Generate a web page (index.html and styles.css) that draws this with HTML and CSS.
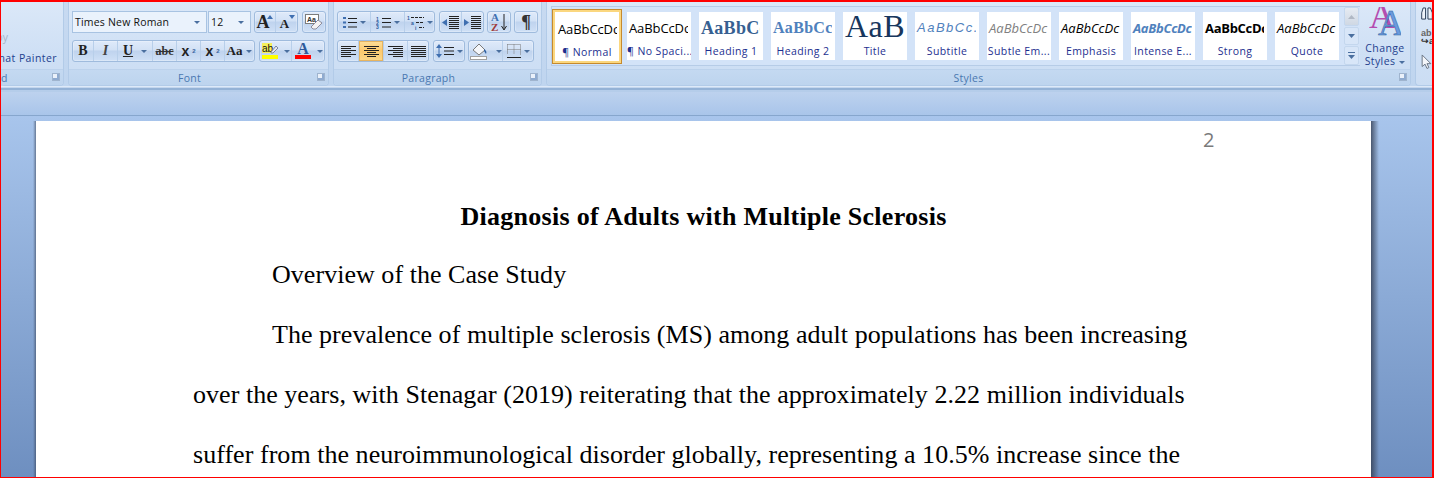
FILE: index.html
```html
<!DOCTYPE html>
<html lang="en">
<head>
<meta charset="utf-8">
<title>Diagnosis of Adults with Multiple Sclerosis</title>
<link rel="stylesheet" href="styles.css">
</head>
<body>
<div class="app">
  <div class="ribbon">
    <section class="group g-clip">
      <div class="body clip-body">
        <div class="clip-copy">py</div>
        <div class="clip-fmt">Format Painter</div>
      </div>
      <div class="label clip-label"><span class="clip-d">d</span><i class="launch"></i></div>
    </section>

    <section class="group g-font">
      <div class="body">
        <div class="row">
          <div class="select w135"><span>Times New Roman</span><i class="caret"></i></div>
          <div class="select w43 m1"><span>12</span><i class="caret"></i></div>
          <div class="bg m3">
            <div class="b w21"><span class="big-a">A</span><svg class="up" width="6" height="4"><path d="M0 4L3 0L6 4Z" fill="#3f6fb0"/></svg></div>
            <div class="b w21"><span class="small-a">A</span><svg class="down" width="6" height="4"><path d="M0 0H6L3 4Z" fill="#3f6fb0"/></svg></div>
          </div>
          <div class="bg m4"><div class="b w22">
            <svg width="20" height="18" viewBox="0 0 20 18"><rect x="1.500" y="1.500" width="13" height="9" fill="#fff" stroke="#7c7c7c"/><text x="3" y="9" class="tiny">Aa</text><path d="M7 14L14 7L18 10L12 16H9Z" fill="#f4f2f2" stroke="#8c8c9c"/></svg>
          </div></div>
        </div>
        <div class="row">
          <div class="bg">
            <div class="b w21 f-b">B</div>
            <div class="b w24 f-i">I</div>
            <div class="b w35"><span class="f-u">U</span><i class="caret c-r"></i></div>
            <div class="b w24 f-s">abc</div>
            <div class="b w24 f-x">x<sub>2</sub></div>
            <div class="b w24 f-x">x<sup>2</sup></div>
            <div class="b w29"><span class="f-aa">Aa</span><i class="caret c-r2"></i></div>
          </div>
          <div class="bg m4">
            <div class="b w32">
              <svg width="18" height="18" viewBox="0 0 18 18"><rect x="1" y="1" width="10" height="10" fill="#f5f05a"/><text x="1" y="9.500" class="ab">ab</text><path d="M10 10L15 4L17 6L12 11H10Z" fill="#e8e8f0" stroke="#7a88a0"/><rect x="1" y="13" width="16" height="4" fill="#ffff00"/></svg>
              <i class="caret c-h"></i>
            </div>
            <div class="b w32">
              <svg width="18" height="18" viewBox="0 0 18 18"><text x="9" y="12" text-anchor="middle" class="fa">A</text><rect x="1" y="13" width="16" height="4" fill="#f00"/></svg>
              <i class="caret c-h"></i>
            </div>
          </div>
        </div>
      </div>
      <div class="label lab-pad">Font<i class="launch"></i></div>
    </section>

    <section class="group g-para">
      <div class="body">
        <div class="row">
          <div class="bg">
            <div class="b w33"><svg width="15" height="13" viewBox="0 0 15 13"><path d="M1 1h3v2h-3zM1 5.500h3v2h-3zM1 10h3v2h-3z" fill="#3f6fb0"/><path d="M6 2.500h9M6 6.500h9M6 11h9" stroke="#222"/></svg><i class="caret"></i></div>
            <div class="b w34"><svg width="15" height="13" viewBox="0 0 15 13"><text x="0" y="4.500" class="num">1</text><text x="0" y="9" class="num">2</text><text x="0" y="13" class="num">3</text><path d="M6 2.500h9M6 6.500h9M6 11h9" stroke="#222"/></svg><i class="caret"></i></div>
            <div class="b w29"><svg width="17" height="15" viewBox="0 0 17 15"><text x="0" y="5" class="num">1</text><text x="4" y="10" class="num">a</text><text x="8" y="15" class="num">i</text><path d="M4 2.500h13M9 7.500h8M12 12.500h5" stroke="#222" stroke-dasharray="3 1"/></svg><i class="caret"></i></div>
          </div>
          <div class="bg m4">
            <div class="b w22"><svg width="17" height="13" viewBox="0 0 17 13"><path d="M7 .5h10M7 2.500h10M7 4.500h10M7 6.500h10M7 8.500h10M7 10.500h10M7 12.500h10" stroke="#222"/><path d="M0 6.500L5 3V10Z" fill="#3f6fb0"/></svg></div>
            <div class="b w21"><svg width="17" height="13" viewBox="0 0 17 13"><path d="M7 .5h10M7 2.500h10M7 4.500h10M7 6.500h10M7 8.500h10M7 10.500h10M7 12.500h10" stroke="#222"/><path d="M5 6.500L0 3V10Z" fill="#3f6fb0"/></svg></div>
          </div>
          <div class="bg m3"><div class="b w22"><svg width="18" height="20" viewBox="0 0 18 20"><text x="1" y="9" class="az az1">A</text><text x="1" y="19" class="az az2">Z</text><path d="M14 2V17M11.500 14L14 18L16.500 14" stroke="#222" fill="none"/></svg></div></div>
          <div class="bg m3"><div class="b w22 f-p">¶</div></div>
        </div>
        <div class="row">
          <div class="bg">
            <div class="b w21"><svg width="15" height="11" viewBox="0 0 15 11"><path d="M0 .5h15M0 2.500h10M0 4.500h15M0 6.500h10M0 8.500h15M0 10.500h10" stroke="#222"/></svg></div>
            <div class="b w25 on"><svg width="15" height="11" viewBox="0 0 15 11"><path d="M0 .5h15M3 2.500h9M0 4.500h15M3 6.500h9M0 8.500h15M3 10.500h9" stroke="#222"/></svg></div>
            <div class="b w24"><svg width="15" height="11" viewBox="0 0 15 11"><path d="M0 .5h15M5 2.500h10M0 4.500h15M5 6.500h10M0 8.500h15M5 10.500h10" stroke="#222"/></svg></div>
            <div class="b w20"><svg width="15" height="11" viewBox="0 0 15 11"><path d="M0 .5h15M0 2.500h15M0 4.500h15M0 6.500h15M0 8.500h15M0 10.500h15" stroke="#222"/></svg></div>
          </div>
          <div class="bg m4"><div class="b w30"><svg width="18" height="16" viewBox="0 0 18 16"><path d="M3 1L6 5H0ZM3 15L6 11H0Z" fill="#3f6fb0"/><path d="M3 4V12" stroke="#3f6fb0"/><path d="M8 4.500h10M8 8h10M8 11.500h10" stroke="#222"/></svg><i class="caret"></i></div></div>
          <div class="bg m3">
            <div class="b w34"><svg width="18" height="18" viewBox="0 0 18 18"><path d="M3 8L9 2L15 8L9 13Z" fill="#f4f6fa" stroke="#7a7a7a"/><path d="M14 7C16 8 17 10 16 12L14 9Z" fill="#2d5fa0"/><rect x="0.500" y="14.500" width="16" height="3" fill="#fff" stroke="#a0a0a0"/></svg><i class="caret c-r"></i></div>
            <div class="b w30"><svg width="14" height="14" viewBox="0 0 14 14"><path d="M.5 .5h13v10M.5 .5v10M7 .5v10M.5 5.500h13" stroke="#777" stroke-dasharray="1 1" fill="none"/><path d="M0 13.500h14" stroke="#222"/></svg><i class="caret"></i></div>
          </div>
        </div>
      </div>
      <div class="label lab-pad">Paragraph<i class="launch"></i></div>
    </section>

    <section class="group g-styles">
      <div class="body styles-body">
        <div class="gallery">
          <div class="tile tile-on"><div class="pv pv-normal">AaBbCcDc</div><div class="tl">¶ Normal</div></div>
          <div class="tile"><div class="pv pv-normal">AaBbCcDc</div><div class="tl">¶ No Spaci...</div></div>
          <div class="tile"><div class="pv pv-h1">AaBbCc</div><div class="tl">Heading 1</div></div>
          <div class="tile"><div class="pv pv-h2">AaBbCc</div><div class="tl">Heading 2</div></div>
          <div class="tile"><div class="pv pv-title">AaB</div><div class="tl">Title</div></div>
          <div class="tile"><div class="pv pv-sub">AaBbCc.</div><div class="tl">Subtitle</div></div>
          <div class="tile"><div class="pv pv-se">AaBbCcDc</div><div class="tl">Subtle Em...</div></div>
          <div class="tile"><div class="pv pv-em">AaBbCcDc</div><div class="tl">Emphasis</div></div>
          <div class="tile"><div class="pv pv-ie">AaBbCcDc</div><div class="tl">Intense E...</div></div>
          <div class="tile"><div class="pv pv-st">AaBbCcDc</div><div class="tl">Strong</div></div>
          <div class="tile"><div class="pv pv-em">AaBbCcDc</div><div class="tl">Quote</div></div>
          <div class="scroll">
            <div class="sb sb-top"><svg width="7" height="4"><path d="M0 4L3.500 0L7 4Z" fill="#b0b8c4"/></svg></div>
            <div class="sb sb-mid"><svg width="7" height="4"><path d="M0 0H7L3.500 4Z" fill="#4a6f9f"/></svg></div>
            <div class="sb sb-bot"><svg width="7" height="7"><path d="M0 .5H7" stroke="#4a6f9f"/><path d="M0 3H7L3.500 7Z" fill="#4a6f9f"/></svg></div>
          </div>
        </div>
        <div class="change">
          <svg class="ca-icon" width="32" height="30" viewBox="0 0 32 30"><text x="0" y="21" class="ca ca1">A</text><text x="9" y="28" class="ca ca2">A</text></svg>
          <div class="ctext">Change<br>Styles<i class="caret c-s"></i></div>
        </div>
      </div>
      <div class="label lab-styles">Styles<i class="launch"></i></div>
    </section>

    <section class="group g-edit">
      <div class="body edit-body">
        <svg width="12" height="13" viewBox="0 0 12 13"><path d="M.5 12.500V6L2 1H4.500V12.500ZM7 12.500V1H9.500L11.500 6V12.500Z" fill="#eef3fa" stroke="#2c3e58"/></svg>
        <div class="ed-ab">ab<br><span>↪a</span></div>
        <svg width="11" height="16" viewBox="0 0 11 16"><path d="M1 1V13L4 10.500L6 15L8 14L6 10H10Z" fill="#f4f6fa" stroke="#6a7484"/></svg>
      </div>
    </section>
  </div>

  <div class="sep"></div>
  <div class="ruler"></div>

  <div class="work">
    <div class="page">
      <div class="pageno">2</div>
      <h1 class="doc-title">Diagnosis of Adults with Multiple Sclerosis</h1>
      <p class="line ind">Overview of the Case Study</p>
      <p class="line ind">The prevalence of multiple sclerosis (MS) among adult populations has been increasing</p>
      <p class="line">over the years, with Stenagar (2019) reiterating that the approximately 2.22 million individuals</p>
      <p class="line">suffer from the neuroimmunological disorder globally, representing a 10.5% increase since the</p>
    </div>
  </div>
</div>
</body>
</html>
```
FILE: styles.css
```css
* { box-sizing: border-box; }
html, body { margin: 0; padding: 0; height: 478px; overflow: hidden; }
body { font-family: "Open Sans", "Noto Sans", sans-serif; }

.app {
  width: 1434px; height: 478px; overflow: hidden;
  display: flex; flex-direction: column;
  border-top: 2px solid #f00; border-left: 1px solid #f00;
  border-right: 2px solid #f00; border-bottom: 1px solid #f00;
}

/* ribbon */
.ribbon {
  height: 84px; flex: none; display: flex; gap: 4px;
  background: linear-gradient(#c8daf1, #bfd5ef);
}
.group {
  flex: none; height: 84px; display: flex; flex-direction: column;
  border: 1px solid #b2cbe8; border-top: 0; border-radius: 0 0 4px 4px;
  overflow: hidden; background: linear-gradient(#dbe8f8, #cfe0f5 60%, #cbddf3);
}
.g-clip { width: 63px; border-left: 0; }
.g-font { width: 261px; }
.g-para { width: 209px; }
.g-styles { width: 865px; }
.g-edit { width: 17px; border-right: 0; border-radius: 0 0 0 4px; }

.body { height: 67px; padding: 9px 0 0 3px; display: flex; flex-direction: column; gap: 7px; flex: none; }
.label {
  height: 16px; flex: none; display: flex; align-items: center; justify-content: center;
  position: relative; font-size: 10.500px; letter-spacing: .3px; color: #4a78b0;
  background: linear-gradient(#c4d9f1, #bdd4ee);
  border-top: 1px solid #bcd2ec;
}
.lab-pad { padding-right: 18px; }
.lab-styles { padding-right: 20px; }
.launch {
  position: absolute; right: 3px; top: 3px; width: 8px; height: 8px;
  border: 1px solid #9fb4ce; background: #eaf1fa;
  box-shadow: inset -2px -2px 0 #8fabd0;
}

.row { display: flex; height: 22px; align-items: stretch; }
.m1 { margin-left: 1px; }
.m3 { margin-left: 3px; }
.m4 { margin-left: 4px; }

.select {
  display: flex; align-items: center; justify-content: space-between;
  padding: 0 6px 0 2px; background: #eaf2fc; border: 1px solid #a8c3e2;
  font-size: 10.500px; letter-spacing: .2px; color: #111;
}
.w135 { width: 135px; }
.w43 { width: 43px; }

.caret {
  display: block; width: 0; height: 0; flex: none;
  border-left: 3px solid transparent; border-right: 3px solid transparent;
  border-top: 3px solid #4a6f9f;
}
.c-r { margin-left: 5px; }
.c-h { margin-left: 2px; }
.c-r2 { margin-left: 1px; }
.c-s { display: inline-block; vertical-align: middle; margin-left: 4px; }

.bg {
  display: flex; border: 1px solid #9fbbdd; border-radius: 3px; overflow: hidden;
  background: linear-gradient(#dfeafa, #d2e1f5 45%, #bfd3ee 50%, #cfe0f6);
  box-shadow: inset 0 0 0 1px rgba(255,255,255,.25);
}
.b {
  display: flex; align-items: center; justify-content: center; gap: 3px; flex: none;
  border-right: 1px solid #b8cfea; position: relative; height: 20px;
}
.b:last-child { border-right: 0; }
.on { background: linear-gradient(#fddf9a, #fcc96e 50%, #fbd78a); box-shadow: inset 0 0 0 1px #e7b45f; }
.w20 { width: 20px; } .w21 { width: 21px; } .w22 { width: 22px; } .w24 { width: 24px; }
.w25 { width: 25px; } .w29 { width: 29px; } .w30 { width: 30px; } .w32 { width: 32px; }
.w33 { width: 33px; } .w34 { width: 34px; } .w35 { width: 35px; }

.big-a, .small-a, .f-b, .f-i, .f-u, .f-s, .f-x, .f-aa, .f-p {
  font-family: "Liberation Serif", serif; font-weight: 700; color: #222;
}
.big-a { font-size: 18px; margin-right: 4px; }
.small-a { font-size: 13px; margin-top: 3px; margin-right: 4px; }
.up, .down { position: absolute; right: 2px; top: 3px; }
.f-b { font-size: 14px; }
.f-i { font-size: 14px; font-style: italic; color: #444; }
.f-u { font-size: 14px; text-decoration: underline; }
.f-s { font-size: 12px; text-decoration: line-through; color: #333; }
.f-x { font-family: "Liberation Sans", sans-serif; font-size: 14px; }
.f-x sub, .f-x sup { font-size: 6px; color: #36639f; line-height: 0; }
.f-aa { font-size: 13px; }
.f-p { font-size: 18px; color: #333; }
.tiny { font: 700 7px "Liberation Sans", sans-serif; fill: #333; }
.ab { font: 10px "Liberation Sans", sans-serif; fill: #111; }
.fa { font: 700 16px "Liberation Serif", serif; fill: #2f5a9c; }
.num { font: 700 5px "Liberation Sans", sans-serif; fill: #2f5a9c; }
.az { font: 700 11px "Liberation Serif", serif; }
.az1 { fill: #3f6fb0; }
.az2 { fill: #a03a3a; }

/* clipboard */
.clip-body { padding: 0; position: relative; align-items: flex-end; gap: 0; }
.clip-copy { font-size: 10.500px; color: #a6b4c6; height: 14px; margin-top: 28px; padding-right: 55px; line-height: 14px; }
.clip-fmt { font-size: 10.500px; letter-spacing: .42px; color: #1e3f8e; white-space: nowrap; margin-top: 7px; padding-right: 6px; line-height: 14px; }
.clip-label { justify-content: flex-start; }
.clip-d { font-size: 10.500px; }

/* styles */
.styles-body { flex-direction: row; padding: 4px 0 0 4px; gap: 0; }
.gallery {
  width: 809px; height: 60px; display: flex; align-items: flex-start; gap: 8px;
  background: #d3e3f8; border: 1px solid #b6cce7; border-width: 1px 0 1px 1px;
  padding: 5px 0 0 3px; position: relative;
}
.tile { width: 64px; height: 48px; flex: none; background: #fff; overflow: hidden; display: flex; flex-direction: column; }
.tile-on {
  height: 55px; margin: -3px -3px 0 -3px; padding: 3px 3px 0; width: 70px;
  border: 1px solid #c68a2e; box-shadow: inset 0 0 0 2px #fbd77f;
}
.pv { height: 29px; width: 61px; line-height: 32px; padding-left: 2px; white-space: nowrap; overflow: hidden; color: #000; font-size: 13px; font-family: "Open Sans", sans-serif; flex: none; }
.tl { font-size: 10.500px; letter-spacing: .4px; color: #1d2f8f; text-align: center; white-space: nowrap; line-height: 14px; margin-top: 3px; }
.pv-normal { letter-spacing: -.1px; }
.pv-h1 { font: 700 18px/32px "Liberation Serif", serif; letter-spacing: .3px; color: #365f91; }
.pv-h2 { font: 700 16px/32px "Liberation Serif", serif; letter-spacing: .3px; color: #4f81bd; }
.pv-title { font: 32px/29px "Liberation Serif", serif; color: #17365d; letter-spacing: .5px; }
.pv-sub { font: italic 13px/32px "Liberation Sans", sans-serif; color: #4f81bd; letter-spacing: 1.500px; }
.pv-se { font-style: italic; color: #808080; }
.pv-em { font-style: italic; }
.pv-ie { font-style: italic; font-weight: 700; color: #4f81bd; letter-spacing: -.3px; }
.pv-st { font-weight: 700; letter-spacing: -.3px; }

.scroll { display: flex; flex-direction: column; margin: -5px 0 0 -3px; width: 15px; flex: none; gap: 1px; }
.sb { display: flex; align-items: center; justify-content: center; border: 1px solid #c4d7ee; background: #d8e6f8; border-radius: 2px; }
.sb-top { height: 19px; background: linear-gradient(#e6ebf2, #cfd8e4); }
.sb-mid { height: 18px; }
.sb-bot { height: 19px; }

.change { width: 50px; display: flex; flex-direction: column; align-items: center; flex: none; padding-top: 1px; }
.ctext { font-size: 10.500px; letter-spacing: .4px; line-height: 13px; color: #1e3f8e; text-align: center; margin-top: 5px; white-space: nowrap; }
.ca { font: 36px "Liberation Serif", serif; }
.ca1 { fill: #b44db0; }
.ca2 { fill: #6a9ade; stroke: #2d5fa0; stroke-width: .5px; }

/* editing */
.edit-body { padding: 5px 0 0 5px; gap: 9px; }
.ed-ab { font: 700 9px/8px "Liberation Sans", sans-serif; color: #666; white-space: nowrap; }
.ed-ab span { color: #333; }

/* bars */
.sep {
  height: 6px; flex: none;
  background: linear-gradient(#dde9f8 0 1px, #c3d6ee 1px 2px, #94b2d6 2px 4px, #b5cdea 4px);
}
.ruler {
  height: 24px; flex: none; border-bottom: 1px solid #86a6cd;
  background: linear-gradient(#bdd2ee, #a9c5ea);
}

/* document */
.work {
  flex: 1; min-height: 0; padding: 5px 0 0 35px; overflow: hidden;
  background: linear-gradient(#a8c5ec, #6e8fc0);
}
.page {
  width: 1335px; height: 400px; background: #fff; position: relative;
  padding: 67px 157px 0;
  color: #000; font-family: "Liberation Serif", serif;
}
.page::before, .page::after { content: ""; position: absolute; top: 0; bottom: 0; }
.page::before { right: 100%; width: 3px; background: linear-gradient(to left, rgba(50,60,80,.55), rgba(50,60,80,0)); }
.page::after { left: 100%; width: 8px; background: linear-gradient(to right, rgba(50,60,80,.8), rgba(50,60,80,0)); }
.pageno {
  position: absolute; left: 1167px; top: 5px;
  font: 20px/28px "Open Sans", sans-serif; color: #7a7a7a;
}
.doc-title { margin: 0; font-size: 26px; letter-spacing: .28px; line-height: 57px; font-weight: 700; text-align: center; }
.line { margin: 0; font-size: 26px; letter-spacing: .04px; line-height: 60px; white-space: nowrap; }
.ind { padding-left: 79px; }
```
